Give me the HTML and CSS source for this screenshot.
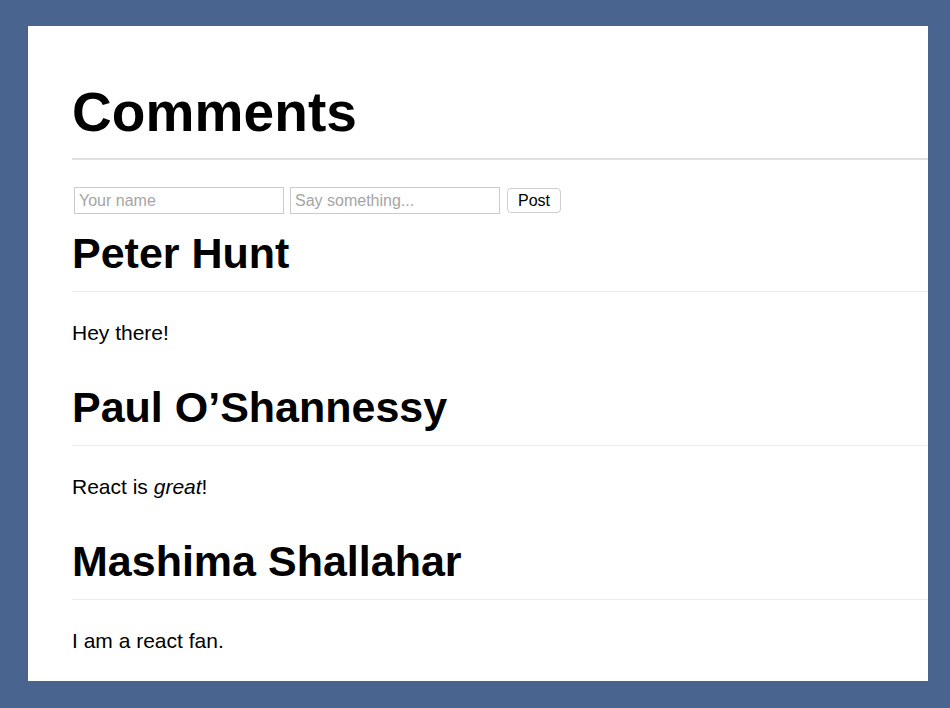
FILE: index.html
```html
<!DOCTYPE html>
<html lang="en">
<head>
<meta charset="utf-8">
<title>Comments</title>
<link rel="stylesheet" href="styles.css">
</head>
<body>
<main class="panel">
  <h1 class="title">Comments</h1>
  <form class="comment-form">
    <input class="field" type="text" placeholder="Your name">
    <input class="field" type="text" placeholder="Say something...">
    <button class="post-btn" type="button">Post</button>
  </form>
  <div class="comment-list">
    <div class="comment">
      <h2 class="author">Peter Hunt</h2>
      <p class="text">Hey there!</p>
    </div>
    <div class="comment">
      <h2 class="author">Paul O’Shannessy</h2>
      <p class="text">React is <em>great</em>!</p>
    </div>
    <div class="comment">
      <h2 class="author">Mashima Shallahar</h2>
      <p class="text">I am a react fan.</p>
    </div>
  </div>
</main>
</body>
</html>
```

FILE: styles.css
```css
html, body {
  margin: 0;
  padding: 0;
}
body {
  background: #4a6490;
  width: 950px;
  height: 708px;
  overflow: hidden;
  font-family: "Liberation Sans", Arial, sans-serif;
  color: #000;
}
.panel {
  margin: 26px 0 0 28px;
  width: 900px;
  height: 655px;
  box-sizing: border-box;
  background: #fff;
  padding: 53px 0 0 44px;
  overflow: hidden;
}
.title {
  margin: 0;
  font-size: 55px;
  line-height: 66px;
  font-weight: bold;
  padding-bottom: 13px;
  border-bottom: 2px solid #e0e0e0;
  letter-spacing: 0.1px;
}
.comment-form {
  display: flex;
  align-items: center;
  gap: 6px;
  margin: 27px 0 0;
  padding-left: 2px;
}
.field {
  width: 210px;
  height: 27px;
  box-sizing: border-box;
  border: 1px solid #cbcbcb;
  border-radius: 0;
  padding: 0 4px;
  margin: 0;
  font-family: "Liberation Sans", Arial, sans-serif;
  font-size: 16px;
  color: #000;
  background: #fff;
  outline: none;
}
.field::placeholder {
  color: #a5a5a5;
}
.post-btn {
  margin-left: 1px;
  width: 54px;
  height: 25px;
  box-sizing: border-box;
  border: 1px solid #cfcfcf;
  border-radius: 4px;
  background: #fff;
  font-family: "Liberation Sans", Arial, sans-serif;
  font-size: 16px;
  color: #000;
  padding: 0;
}
.comment-list {
  display: flex;
  flex-direction: column;
  gap: 32px;
  margin-top: 13px;
}
.author {
  margin: 0;
  font-size: 43px;
  line-height: 52px;
  font-weight: bold;
  padding-bottom: 12px;
  border-bottom: 1px solid #ececec;
}
.text {
  margin: 25px 0 0;
  font-size: 21px;
  line-height: 32px;
}
```
